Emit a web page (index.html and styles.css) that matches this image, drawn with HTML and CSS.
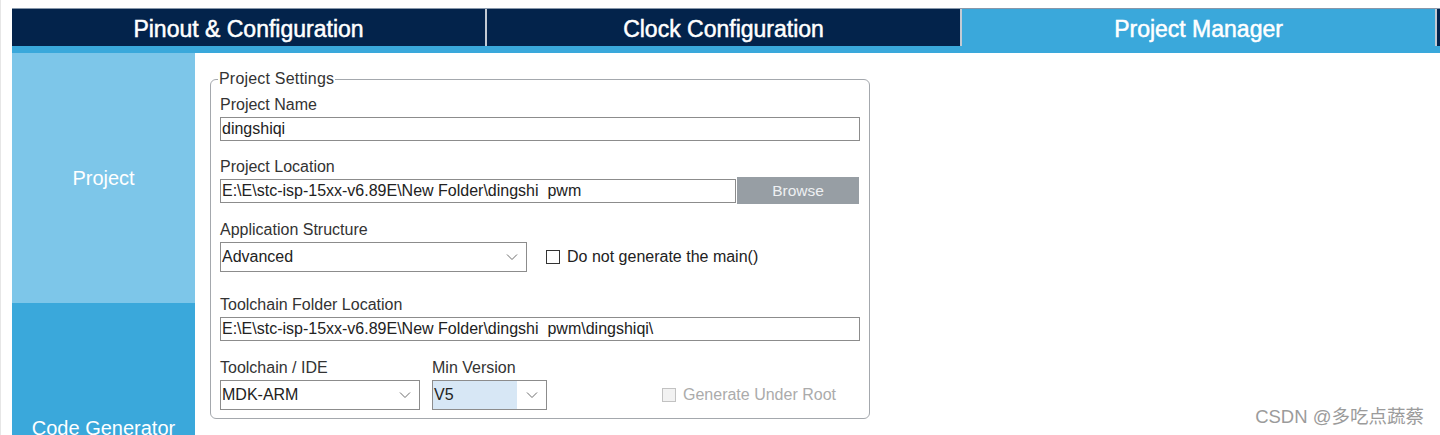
FILE: index.html
```html
<!DOCTYPE html>
<html>
<head>
<meta charset="utf-8">
<link rel="stylesheet" href="styles.css">
</head>
<body>
<div class="app">
  <div class="tabs">
    <div class="tab">Pinout &amp; Configuration</div>
    <div class="tab">Clock Configuration</div>
    <div class="tab active">Project Manager</div>
  </div>
  <div class="strip"></div>
  <div class="main">
    <div class="side">
      <div class="side-item active">Project</div>
      <div class="side-item">Code Generator</div>
    </div>
    <div class="content">
      <fieldset class="group">
        <legend>Project Settings</legend>
        <div class="label first">Project Name</div>
        <div class="input full">dingshiqi</div>

        <div class="label tight">Project Location</div>
        <div class="row">
          <div class="input loc">E:\E\stc-isp-15xx-v6.89E\New Folder\dingshi&nbsp;&nbsp;pwm</div>
          <div class="btn">Browse</div>
        </div>

        <div class="label after-row">Application Structure</div>
        <div class="row">
          <div class="select app-sel">
            <span class="val">Advanced</span>
            <svg class="chev" width="12" height="8" viewBox="0 0 12 8"><polyline points="1,1.5 6,6.5 11,1.5" fill="none" stroke="#6d6d6d" stroke-width="1"/></svg>
          </div>
          <label class="check"><span class="box"></span>Do not generate the main()</label>
        </div>

        <div class="label gap-lg">Toolchain Folder Location</div>
        <div class="input full">E:\E\stc-isp-15xx-v6.89E\New Folder\dingshi&nbsp;&nbsp;pwm\dingshiqi\</div>

        <div class="row bottom">
          <div class="col">
            <div class="label">Toolchain / IDE</div>
            <div class="select ide-sel">
              <span class="val">MDK-ARM</span>
              <svg class="chev" width="12" height="8" viewBox="0 0 12 8"><polyline points="1,1.5 6,6.5 11,1.5" fill="none" stroke="#6d6d6d" stroke-width="1"/></svg>
            </div>
          </div>
          <div class="col">
            <div class="label">Min Version</div>
            <div class="select ver-sel">
              <span class="val hl">V5</span>
              <svg class="chev" width="12" height="8" viewBox="0 0 12 8"><polyline points="1,1.5 6,6.5 11,1.5" fill="none" stroke="#6d6d6d" stroke-width="1"/></svg>
            </div>
          </div>
          <label class="check disabled"><span class="box"></span>Generate Under Root</label>
        </div>
      </fieldset>
    </div>
    <div class="watermark">CSDN @多吃点蔬蔡</div>
  </div>
</div>
</body>
</html>
```

FILE: styles.css
```css
html, body {
  margin: 0;
  padding: 0;
  background: #ffffff;
  height: 435px;
  overflow: hidden;
}
body {
  font-family: "Liberation Sans", Arial, sans-serif;
  color: #333;
}
.app {
  border-left: 1px solid #e6e6e6;
  padding: 8px 0 0 11px;
  height: 427px;
}
.tabs {
  display: flex;
  height: 37px;
  background: #03234b;
  border-top: 1px solid #8797aa;
}
.tab {
  width: 473px;
  flex: none;
  border-right: 2px solid #c3cad3;
  color: #ffffff;
  font-size: 23px;
  font-weight: 400;
  -webkit-text-stroke: 0.5px #ffffff;
  display: flex;
  align-items: center;
  justify-content: center;
  padding-top: 3px;
}
.tab.active {
  background: #3aa8db;
}
.strip {
  height: 7px;
  background: #3aa8db;
}
.main {
  display: flex;
  position: relative;
  height: 382px;
}
.side {
  width: 183px;
  display: flex;
  flex-direction: column;
}
.side-item {
  height: 250px;
  flex: none;
  background: #3aa8db;
  color: #ffffff;
  font-size: 20px;
  display: flex;
  align-items: center;
  justify-content: center;
}
.side-item.active {
  background: #7dc6e9;
}
.content {
  padding: 17px 0 0 15px;
}
.group {
  margin: 0;
  width: 640px;
  border: 1px solid #a4a8ad;
  border-radius: 6px;
  padding: 0 9px 8px 9px;
}
.group legend {
  font-size: 16px;
  line-height: 18px;
  color: #333;
  padding: 0 1px;
  margin-left: -2px;
  letter-spacing: 0.2px;
}
.label {
  font-size: 16px;
  line-height: 20px;
  color: #333;
  margin-top: 16px;
  margin-bottom: 2px;
}
.label.first {
  margin-top: 7px;
}
.label.tight {
  margin-bottom: 0;
}
.label.after-row {
  margin-top: 16px;
}
.label.gap-lg {
  margin-top: 23px;
}
.input {
  height: 22px;
  border: 1px solid #8c8c8c;
  font-size: 16px;
  line-height: 22px;
  padding-left: 1px;
  color: #222;
  white-space: nowrap;
  box-sizing: content-box;
}
.input.full {
  width: 637px;
}
.row {
  display: flex;
  align-items: center;
}
.input.loc {
  width: 513px;
}
.btn {
  width: 122px;
  height: 27px;
  margin-left: 1px;
  background: #979ea4;
  color: #eef0f2;
  font-size: 15.5px;
  display: flex;
  align-items: center;
  justify-content: center;
}
.select {
  height: 28px;
  border: 1px solid #8c8c8c;
  display: flex;
  align-items: center;
  font-size: 16px;
  color: #222;
}
.select .val {
  padding-left: 1px;
  flex: 1;
  height: 28px;
  line-height: 28px;
}
.select .chev {
  margin: 0 8px 0 8px;
}
.app-sel {
  width: 305px;
}
.check {
  display: flex;
  align-items: center;
  font-size: 16px;
  color: #222;
  margin-left: 19px;
}
.check .box {
  width: 12px;
  height: 12px;
  border: 1px solid #333;
  background: #fff;
  margin-right: 7px;
}
.check.disabled {
  color: #ababab;
  margin-left: 103px;
  align-self: flex-end;
  height: 30px;
}
.check.disabled .box {
  border-color: #c2c2c2;
  background: #f2f2f2;
}
.row.bottom {
  align-items: flex-start;
}
.row.bottom .label {
  margin-top: 17px;
}
.col {
  margin-right: 12px;
}
.ide-sel {
  width: 198px;
}
.ver-sel {
  width: 113px;
}
.val.hl {
  background: #d7e7f5;
  flex: none;
  width: 83px;
}
.ver-sel .chev {
  margin-left: 9px;
}
.watermark {
  position: absolute;
  right: 16px;
  bottom: 7px;
  font-family: "Liberation Sans", "Noto Sans CJK SC", sans-serif;
  font-size: 18.5px;
  color: #9b9b9b;
}
```
